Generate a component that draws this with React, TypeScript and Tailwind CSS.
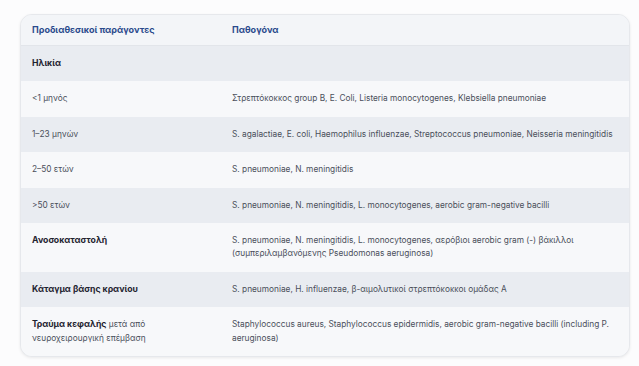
import { JSX } from "react"

type Row = {
  label: JSX.Element
  pathogens: string
  shaded: boolean
}

const rows: Row[] = [
  { label: <span className="font-bold text-[8.7px] text-[#1f2430]">Ηλικία</span>, pathogens: "", shaded: true },
  {
    label: <span>&lt;1 μηνός</span>,
    pathogens: "Στρεπτόκοκκος group B, E. Coli, Listeria monocytogenes, Klebsiella pneumoniae",
    shaded: false,
  },
  {
    label: <span>1–23 μηνών</span>,
    pathogens:
      "S. agalactiae, E. coli, Haemophilus influenzae, Streptococcus pneumoniae, Neisseria meningitidis",
    shaded: true,
  },
  { label: <span>2–50 ετών</span>, pathogens: "S. pneumoniae, N. meningitidis", shaded: false },
  {
    label: <span>&gt;50 ετών</span>,
    pathogens: "S. pneumoniae, N. meningitidis, L. monocytogenes, aerobic gram-negative bacilli",
    shaded: true,
  },
  {
    label: <span className="font-bold text-[8.7px] text-[#1f2430]">Ανοσοκαταστολή</span>,
    pathogens:
      "S. pneumoniae, N. meningitidis, L. monocytogenes, αερόβιοι aerobic gram (-) βάκιλλοι (συμπεριλαμβανόμενης Pseudomonas aeruginosa)",
    shaded: false,
  },
  {
    label: <span className="font-bold text-[8.7px] text-[#1f2430]">Κάταγμα βάσης κρανίου</span>,
    pathogens: "S. pneumoniae, H. influenzae, β-αιμολυτικοί στρεπτόκοκκοι ομάδας Α",
    shaded: true,
  },
  {
    label: (
      <>
        <span className="font-bold text-[8.7px] text-[#1f2430]">Τραύμα κεφαλής</span> μετά από
        <br />
        νευροχειρουργική επέμβαση
      </>
    ),
    pathogens:
      "Staphylococcus aureus, Staphylococcus epidermidis, aerobic gram-negative bacilli (including P. aeruginosa)",
    shaded: false,
  },
]

export default function App(): JSX.Element {
  return (
    <div className="w-[639px] h-[366px] bg-[#fcfcfd] pt-[14px] px-[20px] font-['Inter','Noto_Sans',sans-serif] text-[8.3px]">
      <div className="w-[610px] rounded-[12px] overflow-hidden border border-[#e6e8ec] shadow-[0_1px_3px_rgba(0,0,0,0.08)] bg-[#f7f8fa]">
        <div className="flex bg-[#f3f5f8] border-b border-[#e2e5ea] h-[31px] items-center text-[#2a4a8c] font-bold text-[9px]">
          <div className="w-[211px] pl-[11px]">Προδιαθεσικοί παράγοντες</div>
          <div className="flex-1 pr-[14px]">Παθογόνα</div>
        </div>
        {rows.map((r, i) => (
          <div
            key={i}
            className={`flex py-[11px] leading-[13.4px] text-[#4a4f5a] ${
              r.shaded ? "bg-[#e9ecf1]" : "bg-[#f7f8fa]"
            }`}
          >
            <div className="w-[211px] pl-[11px] pr-[20px]">{r.label}</div>
            <div className="flex-1 pr-[14px] min-h-[13px]">{r.pathogens}</div>
          </div>
        ))}
      </div>
    </div>
  )
}
